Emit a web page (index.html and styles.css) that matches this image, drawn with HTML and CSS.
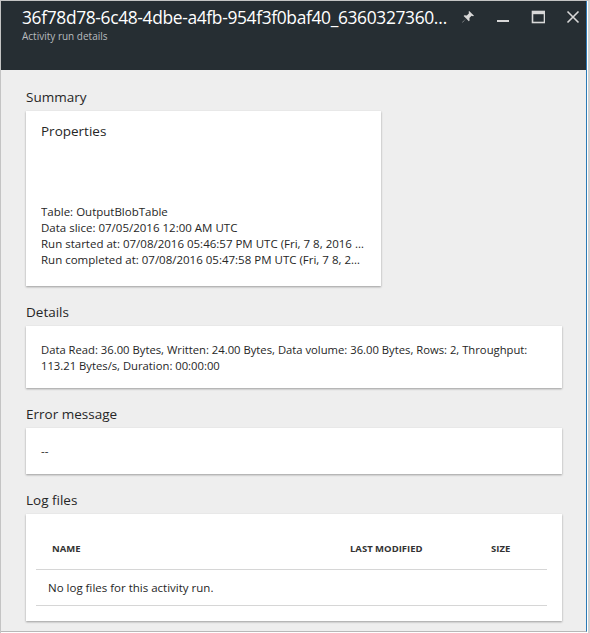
FILE: index.html
```html
<!DOCTYPE html>
<html>
<head>
<meta charset="utf-8">
<link rel="stylesheet" href="styles.css">
</head>
<body>
<div class="frame">
  <div class="panel">
    <header class="head">
      <div class="titles">
        <div class="title">36f78d78-6c48-4dbe-a4fb-954f3f0baf40_636032736096470000_636033600000000000_OutputBlobTable</div>
        <div class="subtitle">Activity run details</div>
      </div>
      <div class="controls">
        <svg class="ic pin" width="14" height="14" viewBox="0 0 14 14"><path d="M8.2 1 L13 5.8 L12 6.3 L10.6 5.8 L8.4 8 L8.6 10.4 L7.8 11.2 L5.2 8.6 L1.6 12.6 L1.2 12.2 L5.2 8.6 L2.6 6 L3.4 5.2 L5.8 5.4 L8 3.2 L7.6 1.8 Z" fill="#d8d8d8"/></svg>
        <svg class="ic" width="14" height="14" viewBox="0 0 14 14"><rect x="1" y="10" width="12" height="2" fill="#d8d8d8"/></svg>
        <svg class="ic" width="14" height="14" viewBox="0 0 14 14"><rect x="1.5" y="1.5" width="12" height="11" fill="none" stroke="#d8d8d8" stroke-width="1.6"/><rect x="1" y="1" width="13" height="3.2" fill="#d8d8d8"/></svg>
        <svg class="ic" width="14" height="14" viewBox="0 0 14 14"><path d="M1.5 1.5 L12.5 12.5 M12.5 1.5 L1.5 12.5" stroke="#d8d8d8" stroke-width="1.6"/></svg>
      </div>
    </header>
    <main class="content">
      <h2 class="sec">Summary</h2>
      <section class="card summary">
        <div class="card-title">Properties</div>
        <div class="props">
          <div class="ln">Table: OutputBlobTable</div>
          <div class="ln">Data slice: 07/05/2016 12:00 AM UTC</div>
          <div class="ln">Run started at: 07/08/2016 05:46:57 PM UTC (Fri, 7 8, 2016 05:46:57 PM GMT)</div>
          <div class="ln">Run completed at: 07/08/2016 05:47:58 PM UTC (Fri, 7 8, 2016 05:47:58 PM GMT)</div>
        </div>
      </section>

      <h2 class="sec">Details</h2>
      <section class="card details">
        Data Read: 36.00 Bytes, Written: 24.00 Bytes, Data volume: 36.00 Bytes, Rows: 2, Throughput: 113.21 Bytes/s, Duration: 00:00:00
      </section>

      <h2 class="sec">Error message</h2>
      <section class="card error">--</section>

      <h2 class="sec">Log files</h2>
      <section class="card logs">
        <div class="table">
          <div class="thead">
            <span class="c-name">NAME</span>
            <span class="c-mod">LAST MODIFIED</span>
            <span class="c-size">SIZE</span>
          </div>
          <div class="trow">No log files for this activity run.</div>
        </div>
      </section>
    </main>
  </div>
</div>
</body>
</html>
```
FILE: styles.css
```css
* { box-sizing: border-box; }
html, body { margin: 0; padding: 0; background: #fff; }
body { font-family: "Segoe UI", "Open Sans", "Noto Sans", sans-serif; color: #262626; }

.frame {
  width: 590px;
  height: 633px;
  border-left: 1px solid #c4c4c4;
  border-top: 1px solid #c4c4c4;
  border-right: 2px solid #d2d2d2;
  padding-right: 1px;
  padding-bottom: 1px;
  background: #fff;
}
.panel {
  height: 631px;
  background: #eeeeee;
  border-right: 1px solid #2a7ab6;
  border-bottom: 1px solid #b8b8b8;
  overflow: hidden;
}
.head {
  height: 69px;
  background: #262e33;
  display: flex;
  align-items: flex-start;
  padding: 4px 0 0 21px;
}
.titles { width: 432px; }
.title {
  color: #fff;
  font-size: 17.4px;
  line-height: 24px;
  white-space: nowrap;
  overflow: hidden;
  text-overflow: ellipsis;
  letter-spacing: -0.35px;
}
.subtitle {
  color: #b8bcbf;
  font-size: 10px;
  line-height: 14px;
}
.controls {
  display: flex;
  gap: 21px;
  padding-top: 5px;
  padding-left: 7px;
}
.ic { display: block; }

.content { padding: 17px 24px 0 25px; }
.sec {
  margin: 0 0 4px;
  font-size: 13.5px;
  line-height: 20px;
  font-weight: normal;
  color: #262626;
}
.card {
  background: #fff;
  box-shadow: 0 1px 2px rgba(0,0,0,0.35);
  margin-bottom: 16px;
  font-size: 11.5px;
  line-height: 16px;
}
.summary {
  width: 355px;
  height: 175px;
  padding: 10px 15px 0;
}
.card-title { font-size: 13.5px; line-height: 20px; }
.props { margin-top: 63px; }
.ln { white-space: nowrap; overflow: hidden; text-overflow: ellipsis; }
.details { padding: 16px 15px 14px; font-size: 11.25px; }
.error { padding: 15px 15px 15px; }
.logs { padding: 15px 15px 15px 10px; }
.thead {
  height: 41px;
  display: flex;
  align-items: center;
  border-bottom: 1px solid #d6d6d6;
  font-size: 9.5px;
  font-weight: bold;
  padding-left: 16px;
  color: #333;
}
.c-name { width: 298px; }
.c-mod { width: 141px; }
.trow {
  height: 36px;
  border-bottom: 1px solid #d6d6d6;
  padding: 10px 12px 0;
}
```
